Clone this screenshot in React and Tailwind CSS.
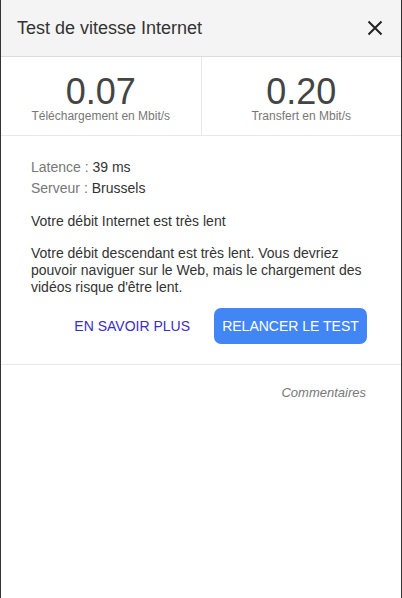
import React from "react";

export default function App() {
  return (
    <div
      className="w-[402px] h-[598px] bg-white border-x border-[#333] flex flex-col overflow-hidden"
      style={{ fontFamily: '"Liberation Sans", Arial, sans-serif' }}
    >
      <div className="h-[57px] bg-[#f4f4f4] border-b border-[#ddd] flex items-center justify-between pl-4 pr-[18px]">
        <span className="text-[18px] text-[#333]">Test de vitesse Internet</span>
        <svg width="16" height="16" viewBox="0 0 16 16" className="text-[#222]">
          <path d="M1.5 1.5 L14.5 14.5 M14.5 1.5 L1.5 14.5" stroke="currentColor" strokeWidth="2" />
        </svg>
      </div>
      <div className="flex h-[79px] border-b border-[#e8e8e8]">
        <div className="flex-1 flex flex-col items-center pt-[17px] border-r border-[#e8e8e8]">
          <span className="text-[36px] leading-[36px] text-[#444]">0.07</span>
          <span className="text-[12px] leading-[12px] text-[#777]">Téléchargement en Mbit/s</span>
        </div>
        <div className="flex-1 flex flex-col items-center pt-[17px]">
          <span className="text-[36px] leading-[36px] text-[#444]">0.20</span>
          <span className="text-[12px] leading-[12px] text-[#777]">Transfert en Mbit/s</span>
        </div>
      </div>
      <div className="px-[30px] pt-[21px] text-[14px] leading-[20px]">
        <div className="text-[#777]">
          <span>Latence : </span>
          <span className="text-[#333]">39 ms</span>
        </div>
        <div className="text-[#777] mt-[1px]">
          <span>Serveur : </span>
          <span className="text-[#333]">Brussels</span>
        </div>
        <div className="text-[#333] mt-[13px]">Votre débit Internet est très lent</div>
        <div className="text-[#333] mt-[14px] leading-[17px]">
          Votre débit descendant est très lent. Vous devriez pouvoir naviguer sur le Web, mais le chargement des vidéos risque d'être lent.
        </div>
      </div>
      <div className="flex justify-end items-center gap-[24px] pr-[34px] mt-[12px]">
        <span className="text-[14px] text-[#3a2ec2]">EN SAVOIR PLUS</span>
        <div className="h-[36px] w-[153px] rounded-[7px] bg-[#4285f4] text-white text-[14px] flex items-center justify-center">
          RELANCER LE TEST
        </div>
      </div>
      <div className="mt-[20px] border-t border-[#e8e8e8]" />
      <div className="flex justify-end pr-[35px] pt-[18px]">
        <span className="text-[13px] italic text-[#777]">Commentaires</span>
      </div>
    </div>
  );
}
